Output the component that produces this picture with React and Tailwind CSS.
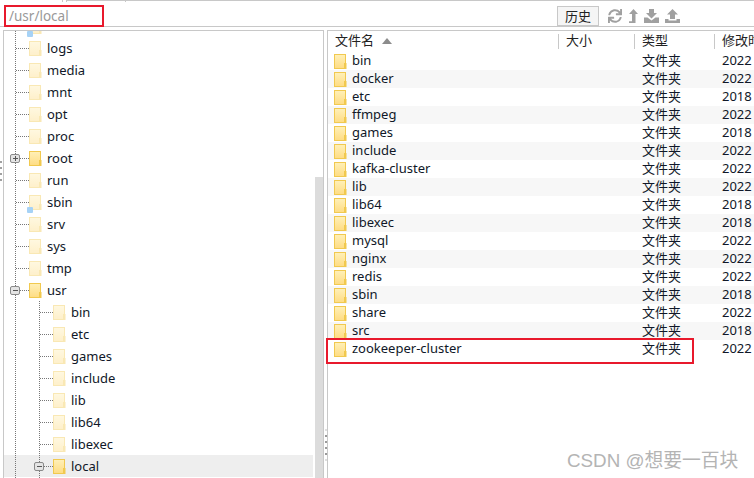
import { FaSync } from 'react-icons/fa';

const FONT = 'font-["Noto_Sans","Noto_Sans_CJK_SC",sans-serif]';

const treeRows = [
  { name: 'lib64', level: 1, link: true },
  { name: 'logs', level: 1 },
  { name: 'media', level: 1 },
  { name: 'mnt', level: 1 },
  { name: 'opt', level: 1 },
  { name: 'proc', level: 1 },
  { name: 'root', level: 1, loaded: true, box: 'plus' },
  { name: 'run', level: 1 },
  { name: 'sbin', level: 1, link: true },
  { name: 'srv', level: 1 },
  { name: 'sys', level: 1 },
  { name: 'tmp', level: 1 },
  { name: 'usr', level: 1, loaded: true, box: 'minus' },
  { name: 'bin', level: 2 },
  { name: 'etc', level: 2 },
  { name: 'games', level: 2 },
  { name: 'include', level: 2 },
  { name: 'lib', level: 2 },
  { name: 'lib64', level: 2 },
  { name: 'libexec', level: 2 },
  { name: 'local', level: 2, loaded: true, box: 'minus', selected: true },
  { name: '', level: 3 },
];

const files = [
  ['bin', '2022'],
  ['docker', '2022'],
  ['etc', '2018'],
  ['ffmpeg', '2022'],
  ['games', '2018'],
  ['include', '2022'],
  ['kafka-cluster', '2022'],
  ['lib', '2022'],
  ['lib64', '2018'],
  ['libexec', '2018'],
  ['mysql', '2022'],
  ['nginx', '2022'],
  ['redis', '2022'],
  ['sbin', '2018'],
  ['share', '2022'],
  ['src', '2018'],
  ['zookeeper-cluster', '2022'],
];

const Folder = ({ faded }) => (
  <svg width="13" height="15" viewBox="0 0 13 15" className="shrink-0">
    <defs>
      <linearGradient id="folderFill" x1="0" y1="0" x2="0" y2="1">
        <stop offset="0" stopColor="#fff0b8" />
        <stop offset="1" stopColor="#fedc83" />
      </linearGradient>
    </defs>
    <g opacity={faded ? 0.42 : 1}>
      <rect x="0.5" y="0.5" width="11" height="14" fill="url(#folderFill)" stroke="#f1c94f" />
      <rect x="10" y="9" width="2.5" height="6" fill="#f1c94f" />
    </g>
  </svg>
);

// dotted tree connectors and the +/- box in front of a row
const Gutter = ({ level, box, hidden }) => {
  const w = level === 1 ? 25 : 49;
  const armX = level === 1 ? 11 : 35;
  return (
    <svg width={w} height="22" viewBox={`0 0 ${w} 22`} className="shrink-0">
      <g stroke="#777" strokeDasharray="1 1" fill="none">
        <path d="M11.5 0V22" />
        {level > 1 && <path d="M35.5 0V22" />}
        {!hidden && <path d={`M${armX + 1} 11.5H${w}`} />}
      </g>
      {box && (
        <g>
          <rect x={armX - 4.5} y="7.5" width="9" height="8" rx="1.5" fill="#e4e4e4" stroke="#8a8a8a" />
          <path d={`M${armX - 2} 11.5H${armX + 3}`} stroke="#555" />
          {box === 'plus' && <path d={`M${armX + 0.5} 9V14`} stroke="#555" />}
        </g>
      )}
    </svg>
  );
};

const TreeRow = ({ row }) => (
  <div className={`flex h-[22px] shrink-0 items-center ${row.selected ? 'bg-[#eeeeee]' : ''}`}>
    <Gutter level={row.level === 3 ? 2 : row.level} box={row.box} hidden={row.level === 3} />
    {row.name && (
      <div className="relative flex items-center">
        <Folder faded={!row.loaded} />
        {row.link && (
          <span className="absolute -left-[2px] bottom-0 h-[6px] w-[6px] rounded-[1px] bg-[#a6d2f6]" />
        )}
        <span className="ml-[5px] text-[13px] leading-[22px] text-[#101828]">{row.name}</span>
      </div>
    )}
  </div>
);

const UpIcon = () => (
  <svg width="10" height="14" viewBox="0 0 10 14" fill="#a0a0a0">
    <path d="M5.5 0 10 5H7.5V14H1V12.3H4V5H1Z" />
  </svg>
);

const DownloadIcon = () => (
  <svg width="15" height="14" viewBox="0 0 15 14" fill="#a0a0a0">
    <path d="M5 0H10V4H13L7.5 9.5 2 4H5Z" />
    <path d="M0 8.5H3.5L7.5 11.5 11.5 8.5H15V14H0Z" />
  </svg>
);

const UploadIcon = () => (
  <svg width="15" height="14" viewBox="0 0 15 14" fill="#a0a0a0">
    <path d="M7.5 0 13 5.5H10V10H5V5.5H2Z" />
    <path d="M0 10H3.5V11.5H11.5V10H15V14H0Z" />
  </svg>
);

const HeaderCell = ({ width, children }) => (
  <div className={`flex h-[15px] shrink-0 items-center border-l border-[#c8c8c8] pl-[7px] ${width}`}>
    {children}
  </div>
);

export default function App() {
  return (
    <div className={`relative flex h-[478px] w-[754px] flex-col overflow-hidden bg-white ${FONT}`}>
      {/* tabs strip cut off by the crop */}
      <div className="flex h-[2px] shrink-0">
        <div className="w-[63px] border-r border-[#c8c8c8]" />
        <div className="ml-[3px] w-[60px] border-x border-t border-[#c8c8c8]" />
        <div className="flex-1 border-t border-[#c8c8c8]" />
      </div>

      {/* path bar */}
      <div className="flex h-[25px] shrink-0 items-center border-b border-[#c8c8c8]">
        <span className="ml-[9px] mt-[3px] text-[13.5px] leading-[20px] text-[#999999]">/usr/local</span>
        <button className="ml-auto mt-[3px] h-[20px] w-[42px] border border-[#c8c8c8] bg-[#f5f5f5] text-[13px] leading-[18px] text-[#222]">
          历史
        </button>
        <div className="ml-[9px] mr-[74px] mt-[3px] flex items-center">
          <FaSync className="text-[14px] text-[#a0a0a0]" />
          <span className="ml-[6px] flex">
            <UpIcon />
          </span>
          <span className="ml-[6px] flex">
            <DownloadIcon />
          </span>
          <span className="ml-[6px] flex">
            <UploadIcon />
          </span>
        </div>
      </div>

      <div className="flex min-h-0 flex-1 pt-[3px]">
        {/* left handle */}
        <div className="flex w-[3px] shrink-0 flex-col justify-start gap-[4px] pt-[131px]">
          {[0, 1, 2, 3].map((i) => (
            <span key={i} className="h-[2px] w-[2px] bg-[#a0a0a0]" />
          ))}
        </div>

        {/* directory tree */}
        <div className="flex w-[321px] shrink-0 border-x border-t border-[#c8c8c8]">
          <div className="min-w-0 flex-1 overflow-hidden">
            <div className="-mt-[16px] flex flex-col">
              {treeRows.map((row, i) => (
                <TreeRow key={i} row={row} />
              ))}
            </div>
          </div>
          <div className="ml-[2px] w-[8px] shrink-0 pt-[146px]">
            <div className="h-full bg-[#dcdcdc]" />
          </div>
        </div>

        {/* splitter */}
        <div className="flex w-[3px] shrink-0 flex-col items-center gap-[4px] pt-[399px]">
          {[0, 1, 2, 3, 4, 5].map((i) => (
            <span key={i} className={`h-[2px] w-[2px] ${i === 0 || i === 5 ? 'bg-[#e0e0e0]' : 'bg-[#9a9a9a]'}`} />
          ))}
        </div>

        {/* file list */}
        <div className="min-w-0 flex-1 overflow-hidden border-l border-t border-[#c8c8c8]">
          <div className="flex h-[21px] items-center pb-[1px] text-[13px] text-[#222]">
            <div className="flex w-[230px] shrink-0 items-center pl-[7px]">
              文件名
              <span className="ml-[8px] h-0 w-0 border-x-[5px] border-b-[6px] border-x-transparent border-b-[#8c8c8c]" />
            </div>
            <HeaderCell width="w-[76px]">大小</HeaderCell>
            <HeaderCell width="w-[80px]">类型</HeaderCell>
            <HeaderCell width="w-[60px]">
              <span className="whitespace-nowrap">修改时间</span>
            </HeaderCell>
          </div>
          {files.map(([name, date], i) => (
            <div
              key={name}
              className={`flex h-[18px] items-center text-[13px] text-[#101828] ${i % 2 === 1 ? 'bg-[#f7f7f7]' : ''}`}
            >
              <div className="flex w-[314px] shrink-0 items-center pl-[6px]">
                <Folder />
                <span className="ml-[5px]">{name}</span>
              </div>
              <span className="w-[80px] shrink-0">文件夹</span>
              <span>{date}</span>
            </div>
          ))}
        </div>
      </div>

      {/* annotations on top of the screenshot */}
      <div className="absolute left-[4px] top-[5px] h-[22px] w-[100px] border-2 border-[#e8192c]" />
      <div className="absolute left-[326px] top-[338px] h-[26px] w-[368px] border-2 border-[#e8192c]" />
      <span className='absolute left-[567px] top-[447px] font-["Liberation_Sans","Noto_Sans_CJK_SC",sans-serif] text-[18.8px] text-[#b4b4b4]'>
        CSDN @想要一百块
      </span>
    </div>
  );
}
